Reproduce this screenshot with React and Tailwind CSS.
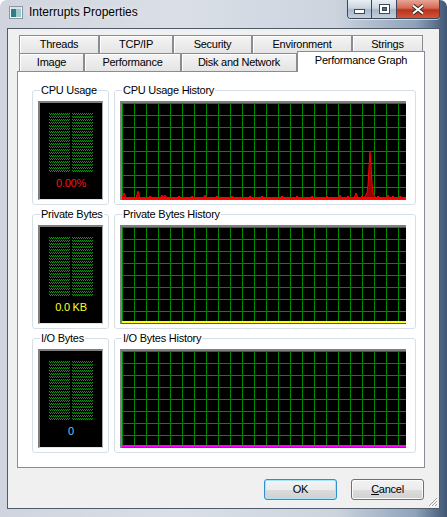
import React from "react";

const rowOne = [
  ["Threads", "w-[80px]"],
  ["TCP/IP", "w-[74px]"],
  ["Security", "w-[79px]"],
  ["Environment", "w-[100px]"],
  ["Strings", "w-[71px]"],
];

const rowTwo = [
  ["Image", "w-[65px]"],
  ["Performance", "w-[97px]"],
  ["Disk and Network", "w-[116px]"],
];

// small bumps along the cpu trace: [x, height]
const bumps = [
  [2, 5], [16, 7], [28, 2], [40, 3], [43, 3], [57, 2], [70, 2], [83, 3], [95, 2],
  [110, 2], [128, 2], [140, 2], [160, 2], [175, 2], [190, 2], [205, 2],
  [218, 3], [226, 2], [234, 5], [240, 2], [256, 2], [266, 3], [271, 2], [278, 2],
];

const Tab = ({ label, w }) => (
  <div
    className={`${w} h-full flex items-center justify-center border border-b-0 border-[#898c95] bg-[linear-gradient(#f4f4f4,#e4e4e4)] shadow-[inset_1px_1px_0_#ffffff] text-black`}
  >
    {label}
  </div>
);

const Dots = ({ id }) => (
  <svg width="21" height="60">
    <defs>
      <pattern id={id} width="2" height="3" patternUnits="userSpaceOnUse">
        <rect x="0" y="0" width="1" height="1" fill="#0c9a0c" />
        <rect x="1" y="1" width="1" height="1" fill="#0c9a0c" />
      </pattern>
    </defs>
    <rect width="21" height="60" fill={`url(#${id})`} />
  </svg>
);

const Meter = ({ id, value, color }) => (
  <div className="w-[65px] h-[99px] bg-black border-t-2 border-l-2 border-r border-b border-t-[#7f7f7f] border-l-[#7f7f7f] border-r-[#a8a8a8] border-b-[#e4e4e4] flex flex-col items-center">
    <div className="mt-[10px] flex gap-[2px]">
      <Dots id={id + "a"} />
      <Dots id={id + "b"} />
    </div>
    <div className={`mt-[4px] text-[11px] leading-[13px] ${color}`}>{value}</div>
  </div>
);

const Graph = ({ id, children }) => (
  <div className="w-[286px] h-[99px] bg-black border-t-2 border-l-2 border-[#7f7f7f]">
    <svg width="284" height="97" className="block">
      <defs>
        <pattern id={id} width="12" height="12" patternUnits="userSpaceOnUse">
          <path d="M0.5 0V12M0 0.5H12" stroke="#008a00" strokeWidth="1" fill="none" />
        </pattern>
      </defs>
      <rect width="284" height="97" fill={`url(#${id})`} />
      {children}
    </svg>
  </div>
);

const CpuTrace = () => (
  <g>
    {bumps.map(([x, h]) => (
      <polygon
        key={x}
        points={`${x - 2},95 ${x},${95 - h} ${x + 2},95`}
        fill="#9a0000"
        stroke="#ff0000"
        strokeWidth="1"
      />
    ))}
    <polygon
      points="242,95 245,90 246,82 247,64 248,49 249,62 250,80 251,90 254,95"
      fill="#9a0000"
      stroke="#ff0000"
      strokeWidth="1"
    />
    <rect x="0" y="94" width="284" height="2" fill="#ff0000" />
  </g>
);

const Group = ({ title, pad, children }) => (
  <fieldset className={`min-w-0 shrink-0 border border-[#d5dfe5] rounded-[3px] pt-[4px] pb-[4px] ${pad}`}>
    <legend className="ml-[2px] px-[1px] whitespace-nowrap text-[11px] leading-[13px] text-black">{title}</legend>
    {children}
  </fieldset>
);

const PerfRow = ({ name, history, meter, graph }) => (
  <div className="flex gap-[5px]">
    <Group title={name} pad="w-[77px] px-[5px]">
      {meter}
    </Group>
    <Group title={history} pad="w-[302px] pl-[5px] pr-[9px]">
      {graph}
    </Group>
  </div>
);

const CaptionButtons = () => (
  <div className="ml-auto mr-[7px] flex h-[19px] rounded-b-[4px] border border-t-0 border-[#3b4656] overflow-hidden shadow-[0_1px_0_rgba(255,255,255,0.6)]">
    <div className="w-[24px] h-full flex items-end justify-center pb-[4px] bg-[linear-gradient(#e9eef4_0%,#c9d4e0_45%,#a9b7c7_55%,#c3d0de_100%)] border-r border-[#3b4656]">
      <svg width="11" height="5">
        <rect x="0.5" y="0.5" width="10" height="4" fill="#ffffff" stroke="#3b4656" />
      </svg>
    </div>
    <div className="w-[25px] h-full flex items-center justify-center bg-[linear-gradient(#e9eef4_0%,#c9d4e0_45%,#a9b7c7_55%,#c3d0de_100%)] border-r border-[#3b4656]">
      <svg width="11" height="10">
        <rect x="0.5" y="0.5" width="10" height="9" fill="#ffffff" stroke="#3b4656" />
        <rect x="3.5" y="3.5" width="4" height="3" fill="#5d6b7d" stroke="#3b4656" />
      </svg>
    </div>
    <div className="w-[42px] h-full flex items-center justify-center bg-[linear-gradient(#e8a595_0%,#d36a55_45%,#b8331c_55%,#d4553a_100%)]">
      <svg width="14" height="11">
        <path d="M2 1.5L7 5.5L12 1.5M2 9.5L7 5.5L12 9.5" stroke="#3b2a2a" strokeWidth="4" fill="none" />
        <path d="M2 1.5L7 5.5L12 1.5M2 9.5L7 5.5L12 9.5" stroke="#ffffff" strokeWidth="2" fill="none" />
      </svg>
    </div>
  </div>
);

const App = () => {
  return (
    <div className="w-[447px] h-[517px] flex flex-col rounded-t-[7px] overflow-hidden bg-[linear-gradient(90deg,#cfd4de_0%,#dadfe7_40%,#cdd4de_75%,#8ea2ba_93%,#3f5675_100%)] font-['Liberation_Sans',Arial,sans-serif] text-[11px] tracking-[-0.25px] text-black select-none">
      {/* title bar */}
      <div className="h-[28px] flex items-start shrink-0">
        <svg width="14" height="13" className="ml-[9px] mt-[6px]">
          <rect x="0.5" y="0.5" width="13" height="12" fill="#f4f6f8" stroke="#8a96a4" />
          <rect x="2" y="3" width="5" height="8" fill="#2f7d86" />
          <rect x="7" y="3" width="5" height="8" fill="#9ccbd0" />
          <rect x="2" y="1.5" width="10" height="1" fill="#c5ccd4" />
        </svg>
        <div className="ml-[6px] mt-[5px] text-[12px] leading-[15px] tracking-normal text-black [text-shadow:0_0_6px_#ffffff]">
          Interrupts Properties
        </div>
        <CaptionButtons />
      </div>

      {/* client area */}
      <div className="relative mx-[7px] h-[481px] shrink-0 border border-[#4f5b69] bg-[#f0f0f0]">
        <div className="ml-[9px] mt-[6px] w-[408px]">
          <div className="flex pl-[2px] h-[18px]">
            {rowOne.map(([l, w]) => (
              <Tab key={l} label={l} w={w} />
            ))}
          </div>
          <div className="flex pl-[2px] h-[18px] items-end">
            {rowTwo.map(([l, w]) => (
              <Tab key={l} label={l} w={w} />
            ))}
            <div className="relative z-10 w-[128px] h-[21px] -mb-[1px] shrink-0 flex items-center justify-center pb-[3px] border border-b-0 border-[#898c95] bg-white">
              Performance Graph
            </div>
          </div>
          <div className="h-[397px] border border-[#898c95] bg-white pl-[14px] pt-[12px]">
            <div className="flex flex-col gap-[3px]">
              <PerfRow
                name="CPU Usage"
                history="CPU Usage History"
                meter={<Meter id="m1" value="0.00%" color="text-[#ff1010]" />}
                graph={
                  <Graph id="g1">
                    <CpuTrace />
                  </Graph>
                }
              />
              <PerfRow
                name="Private Bytes"
                history="Private Bytes History"
                meter={<Meter id="m2" value="0.0 KB" color="text-[#ffff20]" />}
                graph={
                  <Graph id="g2">
                    <rect x="0" y="94" width="284" height="2" fill="#ffff00" />
                  </Graph>
                }
              />
              <PerfRow
                name="I/O Bytes"
                history="I/O Bytes History"
                meter={<Meter id="m3" value="0" color="text-[#6cc8f0]" />}
                graph={
                  <Graph id="g3">
                    <rect x="0" y="94" width="284" height="2" fill="#ff00ff" />
                  </Graph>
                }
              />
            </div>
          </div>
        </div>

        {/* dialog buttons */}
        <div className="mt-[11px] flex justify-end gap-[14px] pr-[15px]">
          <button className="w-[73px] h-[21px] rounded-[3px] border border-[#2e8fd0] shadow-[inset_0_0_0_1px_#a6e6fb] bg-[linear-gradient(#f4f4f4_0%,#ececec_50%,#dcdcdc_50%,#d0d0d0_100%)] text-[11px] leading-[19px] text-black">
            OK
          </button>
          <button className="w-[73px] h-[21px] rounded-[3px] border border-[#707070] shadow-[inset_0_0_0_1px_#fbfbfb] bg-[linear-gradient(#f2f2f2_0%,#ebebeb_50%,#dddddd_50%,#cfcfcf_100%)] text-[11px] leading-[19px] text-black">
            <span className="underline">C</span>ancel
          </button>
        </div>

        {/* size grip */}
        <svg width="10" height="10" className="absolute right-[1px] bottom-[1px]">
          <path d="M9 1L1 9M9 4L4 9M9 7L7 9" stroke="#a0a0a0" strokeWidth="1" />
          <path d="M9.8 1.8L1.8 9.8M9.8 4.8L4.8 9.8M9.8 7.8L7.8 9.8" stroke="#ffffff" strokeWidth="1" />
        </svg>
      </div>
    </div>
  );
};

export default App;
